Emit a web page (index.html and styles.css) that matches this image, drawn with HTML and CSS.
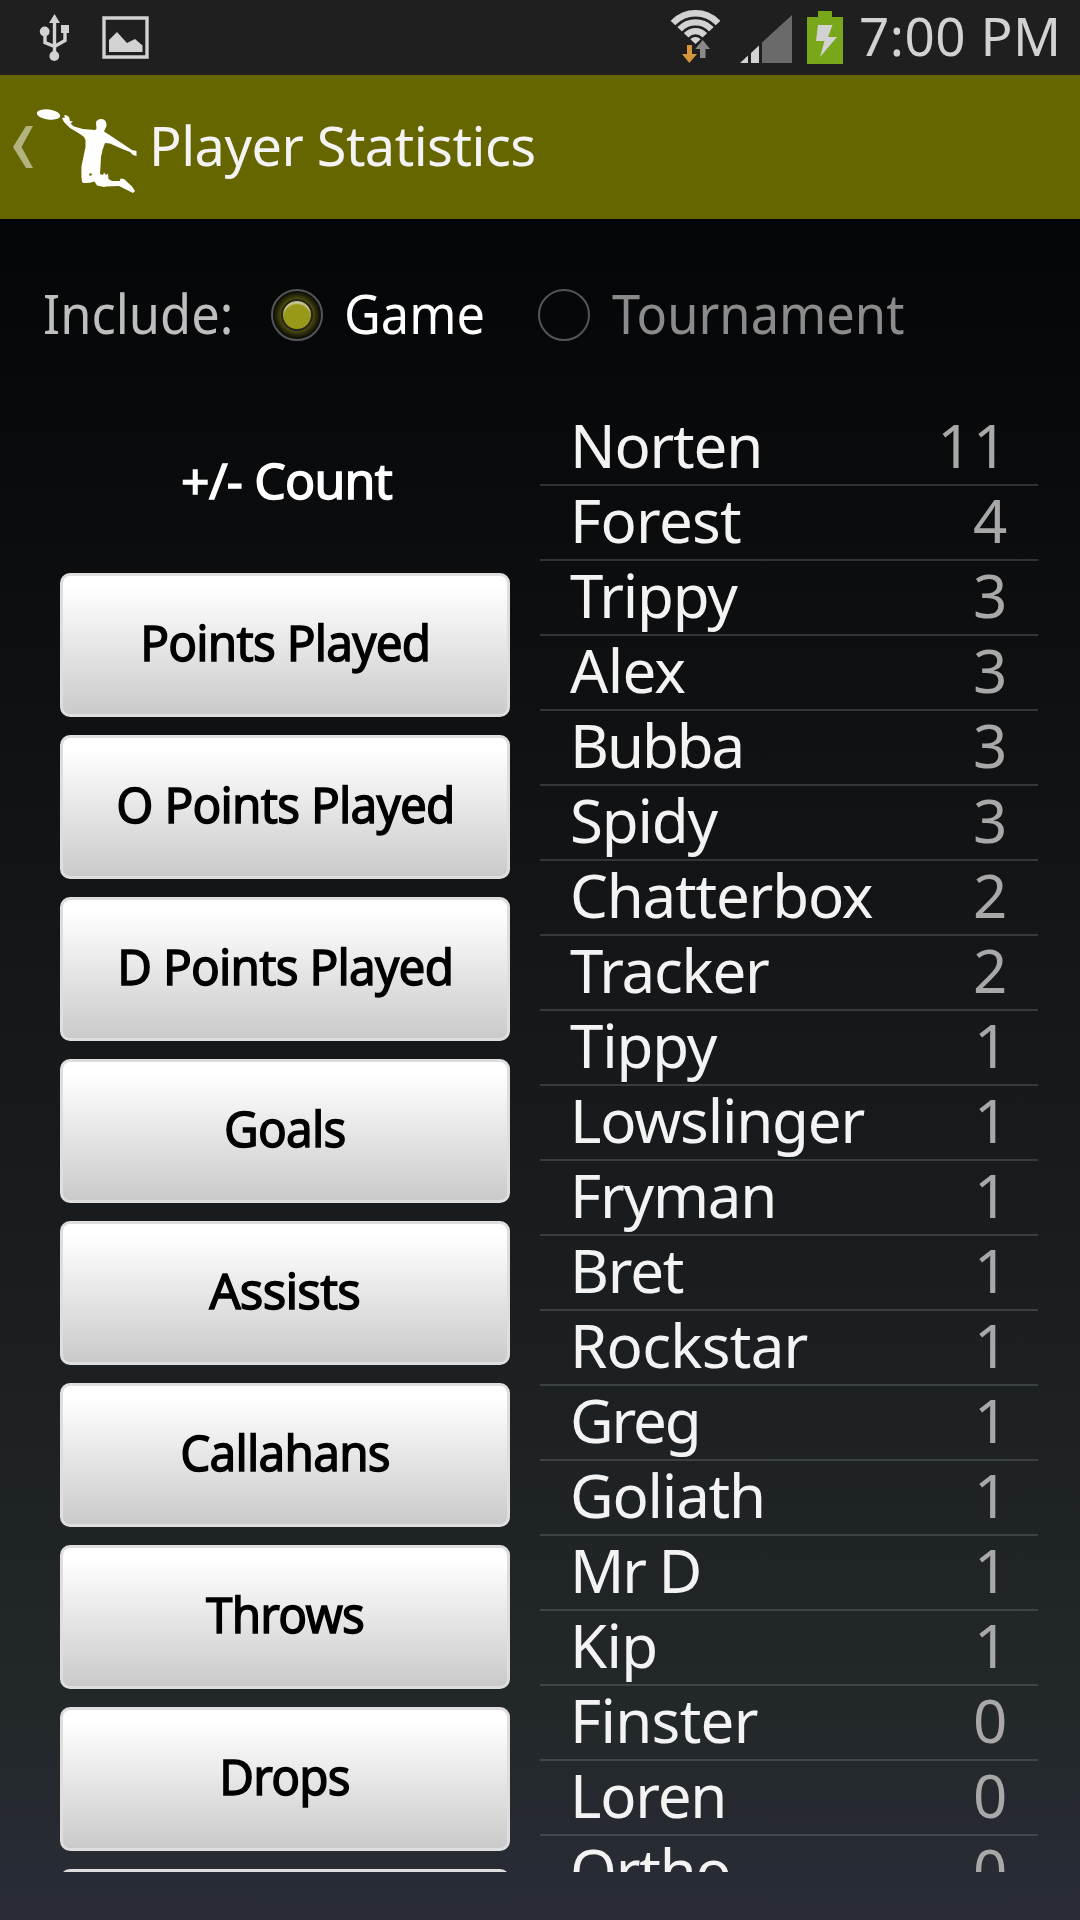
FILE: index.html
```html
<!DOCTYPE html>
<html lang="en">
<head>
<meta charset="utf-8">
<title>Player Statistics</title>
<link rel="stylesheet" href="styles.css">
</head>
<body>
<div class="screen">
  <header class="status">
    <svg class="status-icons" width="160" height="75" viewBox="0 0 160 75">
      <g fill="none" stroke="#d2d2d2" stroke-width="3.4">
        <path d="M54.5 20V54M45 32V42.5L54.5 46.500M65 30V40.500L54.500 46.500"/>
        <path d="M104 18H147V57H104Z"/>
      </g>
      <path fill="#d2d2d2" d="M54.500 14L60 23H49ZM61 25H69V33H61ZM109 40L117 32L127 43L135 39L142.500 45.500V52H109Z"/>
      <circle cx="44.700" cy="31.500" r="4.900" fill="#d2d2d2"/><circle cx="54.300" cy="56" r="4.900" fill="#d2d2d2"/>
    </svg>
    <div class="status-right">
      <svg width="190" height="75" viewBox="660 0 190 75">
        <clipPath id="fan"><path d="M695.500 44L660 11V0H731V11Z"/></clipPath>
        <g clip-path="url(#fan)" fill="none" stroke="#d2d2d2">
          <circle cx="695.500" cy="44" r="30.700" stroke-width="6.500"/>
          <circle cx="695.500" cy="44" r="21.700" stroke-width="6.300"/>
          <circle cx="695.500" cy="44" r="12.800" stroke-width="6.300"/>
          <circle cx="695.500" cy="44" r="3.500" stroke-width="7"/>
        </g>
        <path fill="#d5953d" d="M687 45H692V54H697L689.300 63L682 54H687Z"/>
        <path fill="#8a8a8a" d="M702.700 40L710 49H705.500V58H700V49H695.300Z"/>
        <path fill="#d2d2d2" d="M740 63L748 55.500V63ZM751 63V53L759 45.500V63Z"/>
        <path fill="#6a6a6a" d="M762 63V42.500L792 15V63Z"/>
        <path fill="#78a81a" d="M807 17H818V11H832V17H843V64H807Z"/>
        <path fill="#d2d2d2" d="M818 25H832.500L828 37H837L820 57L824.500 41H816Z"/>
      </svg>
      <span class="clock">7:00 PM</span>
    </div>
  </header>

  <div class="action-bar">
    <svg width="150" height="144" viewBox="0 75 150 144">
      <path fill="#b3b380" d="M26 126H33L21.500 147L33 168H26L13 147Z"/>
      <ellipse cx="48.500" cy="114.500" rx="11.800" ry="5.100" transform="rotate(7 48.500 114.500)" fill="#fff"/>
      <path fill="#fff" fill-rule="evenodd" d="M62 118L65 117.500L64 115.500L66 115L69 117L70 121L73 121.500L70.500 123.500L74 126.500L83 129L95 130L96.500 129L96 122Q98 118.500 102 119Q107 120 106.500 126L104 131.500L108 134L114 138L132 150L136.500 151V156L133 155L130 152L120 148L110 143.500L105 143Q102 150 101 157L100.500 166L100 174L103 175L104 172.500L106 175L108 173.500L108.500 179L112 181L120 181L120.500 178.500L124 179L132 186.500L135 191L133 193L127 190L119 186L106 186.500L104 187L97 185.500L94.500 181.500Q86 184 82.500 182.500Q81 180 81.500 166L85.500 147L85.500 140Q84 136 80 134L70 128L64 122Z M89.200 174.500A1.300 1.300 0 1 0 91.800 174.500A1.300 1.300 0 1 0 89.200 174.500Z"/>
    </svg>
    <h1 class="title">Player Statistics</h1>
  </div>

  <div class="filters">
    <span class="include">Include:</span>
    <span class="radio on"><i class="dot"></i></span>
    <span class="game">Game</span>
    <span class="radio"></span>
    <span class="tournament">Tournament</span>
  </div>

  <main class="content">
    <div class="stats">
      <div class="current">+/- Count</div>
      <button class="stat"><span>Points Played</span></button>
      <button class="stat"><span>O Points Played</span></button>
      <button class="stat"><span>D Points Played</span></button>
      <button class="stat"><span>Goals</span></button>
      <button class="stat"><span class="wide">Assists</span></button>
      <button class="stat"><span>Callahans</span></button>
      <button class="stat"><span>Throws</span></button>
      <button class="stat"><span>Drops</span></button>
      <button class="stat"></button>
    </div>
    <ul class="players">
      <li><span>Norten</span><b>11</b></li>
      <li><span class="loose">Forest</span><b>4</b></li>
      <li><span>Trippy</span><b>3</b></li>
      <li><span class="loose">Alex</span><b>3</b></li>
      <li><span class="tight">Bubba</span><b>3</b></li>
      <li><span>Spidy</span><b>3</b></li>
      <li><span>Chatterbox</span><b>2</b></li>
      <li><span>Tracker</span><b>2</b></li>
      <li><span>Tippy</span><b class="one">1</b></li>
      <li><span>Lowslinger</span><b class="one">1</b></li>
      <li><span>Fryman</span><b class="one">1</b></li>
      <li><span>Bret</span><b class="one">1</b></li>
      <li><span class="loose">Rockstar</span><b class="one">1</b></li>
      <li><span class="tight">Greg</span><b class="one">1</b></li>
      <li><span>Goliath</span><b class="one">1</b></li>
      <li><span class="tight">Mr D</span><b class="one">1</b></li>
      <li><span class="loose">Kip</span><b class="one">1</b></li>
      <li><span class="loose">Finster</span><b>0</b></li>
      <li><span>Loren</span><b>0</b></li>
      <li><span>Ortho</span><b>0</b></li>
    </ul>
  </main>
</div>
</body>
</html>
```
FILE: styles.css
```css
* { box-sizing: border-box; }
body { margin: 0; font-family: "Noto Sans", sans-serif; }
svg { display: block; flex: none; }

.screen {
  width: 1080px;
  height: 1920px;
  overflow: hidden;
  display: flex;
  flex-direction: column;
  background: linear-gradient(#040506 219px, #101113 735px, #23282b 1730px, #292c35 1900px);
}

.status {
  height: 75px;
  flex: none;
  display: flex;
  justify-content: space-between;
  background: #1f1f1f;
  color: #d2d2d2;
}
.status-right { display: flex; width: 420px; }
.clock { margin-left: 9px; font-size: 53px; line-height: 71px; height: 75px; letter-spacing: 0.5px; white-space: nowrap; }

.action-bar {
  height: 144px;
  flex: none;
  display: flex;
  background: #666600;
}
.title {
  margin: 0 0 0 -1px;
  color: #f3f3f3;
  font-size: 54px;
  font-weight: 400;
  line-height: 141px;
  letter-spacing: -0.5px;
}

.filters {
  height: 192px;
  flex: none;
  display: flex;
  align-items: center;
  padding-left: 43px;
  font-size: 54px;
  line-height: 74px;
  white-space: nowrap;
}
.filters > span:not(.radio) { padding-bottom: 5px; transform: scaleX(0.937); transform-origin: left; }
.include { width: 228px; color: #bebebe; }
.game { width: 194px; margin-left: 21px; color: #fff; }
.tournament { margin-left: 22px; color: #8b8b8b; }
.radio {
  width: 52px;
  height: 52px;
  flex: none;
  border: 2px solid #555557;
  border-radius: 50%;
  display: grid;
  place-items: center;
}
.radio.on { background: radial-gradient(closest-side, #66660f 55%, #34340b 78%, #080907 100%); }
.dot {
  width: 32px;
  height: 32px;
  border: 2px solid #24241c;
  border-radius: 50%;
  background: #999919;
  box-shadow: inset 0 3px 1px #c3c391;
}

.content {
  height: 1461px;
  flex: none;
  overflow: hidden;
  display: flex;
  gap: 30px;
  padding-left: 60px;
}
.stats { width: 450px; display: flex; flex-direction: column; gap: 18px; }
.current, .stat {
  height: 144px;
  flex: none;
  font-family: inherit;
  font-size: 50px;
  font-weight: 400;
  letter-spacing: -0.8px;
  -webkit-text-stroke: 1.4px currentColor;
  text-align: center;
}
.current { padding: 1px 0 0 3px; line-height: 136px; color: #fff; }
.stat {
  padding: 0 0 7px;
  border: 3px solid #dedede;
  border-radius: 10px;
  background: linear-gradient(#fff 8%, #cacaca);
  color: #000;
}
.stat span { display: inline-block; transform: scaleX(0.953); }
.stat .wide { transform: scaleX(0.985); }

.players { width: 498px; margin: 0; padding: 0; list-style: none; }
.players li {
  height: 75px;
  display: flex;
  justify-content: space-between;
  padding: 0 29px 0 30px;
  border-bottom: 2px solid rgba(125, 130, 130, 0.33);
  font-size: 60px;
  line-height: 68px;
  color: #f3f3f3;
}
.players span { letter-spacing: -1.2px; }
.players .tight { letter-spacing: -2.1px; }
.players .loose { letter-spacing: -0.7px; }
.players b { font-weight: 400; letter-spacing: 1.6px; color: #a8a8a8; }
.players .one { margin-right: -1px; }
```
